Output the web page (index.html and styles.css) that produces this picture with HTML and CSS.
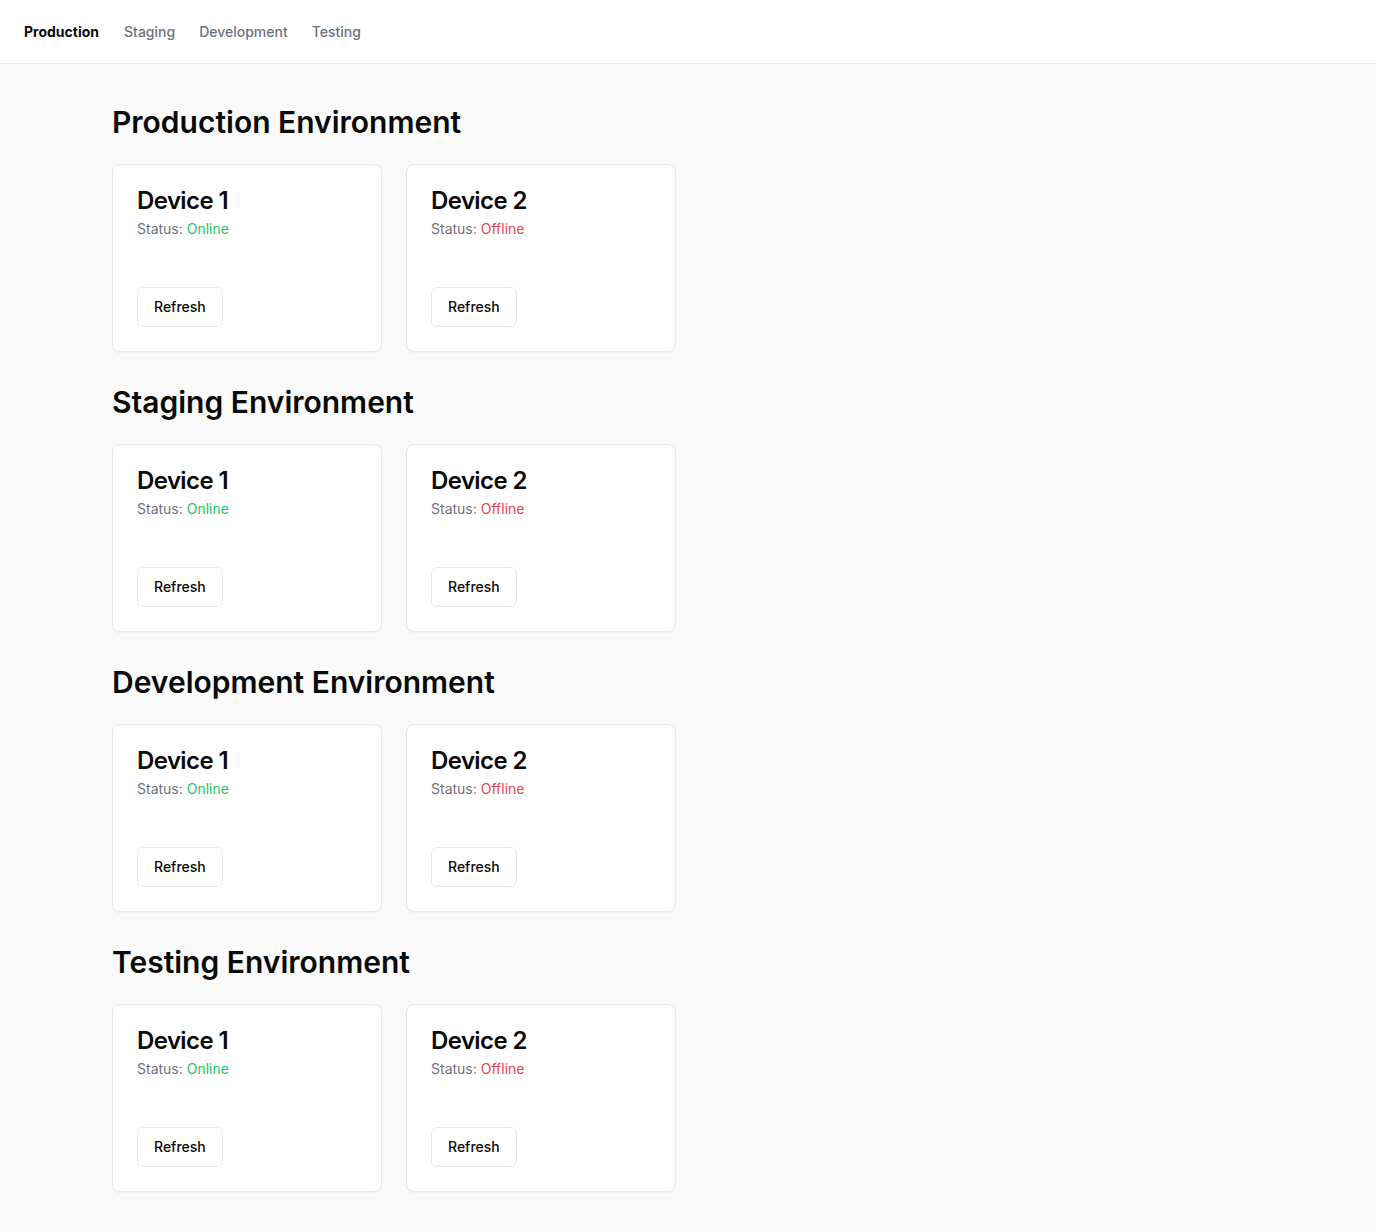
FILE: index.html
```html
<!DOCTYPE html>
<html lang="en">
<head>
<meta charset="utf-8">
<title>Environments</title>
<link rel="stylesheet" href="styles.css">
</head>
<body>
<nav class="nav">
  <a class="nav-link active">Production</a>
  <a class="nav-link">Staging</a>
  <a class="nav-link">Development</a>
  <a class="nav-link">Testing</a>
</nav>
<main class="main">
  <section class="env">
    <h2 class="env-title">Production Environment</h2>
    <div class="grid">
      <div class="card">
        <div class="card-header"><h3 class="card-title">Device 1</h3><p class="card-desc">Status: <span class="online">Online</span></p></div>
        <div class="card-content"></div>
        <div class="card-footer"><button class="btn">Refresh</button></div>
      </div>
      <div class="card">
        <div class="card-header"><h3 class="card-title">Device 2</h3><p class="card-desc">Status: <span class="offline">Offline</span></p></div>
        <div class="card-content"></div>
        <div class="card-footer"><button class="btn">Refresh</button></div>
      </div>
    </div>
  </section>
  <section class="env">
    <h2 class="env-title">Staging Environment</h2>
    <div class="grid">
      <div class="card">
        <div class="card-header"><h3 class="card-title">Device 1</h3><p class="card-desc">Status: <span class="online">Online</span></p></div>
        <div class="card-content"></div>
        <div class="card-footer"><button class="btn">Refresh</button></div>
      </div>
      <div class="card">
        <div class="card-header"><h3 class="card-title">Device 2</h3><p class="card-desc">Status: <span class="offline">Offline</span></p></div>
        <div class="card-content"></div>
        <div class="card-footer"><button class="btn">Refresh</button></div>
      </div>
    </div>
  </section>
  <section class="env">
    <h2 class="env-title">Development Environment</h2>
    <div class="grid">
      <div class="card">
        <div class="card-header"><h3 class="card-title">Device 1</h3><p class="card-desc">Status: <span class="online">Online</span></p></div>
        <div class="card-content"></div>
        <div class="card-footer"><button class="btn">Refresh</button></div>
      </div>
      <div class="card">
        <div class="card-header"><h3 class="card-title">Device 2</h3><p class="card-desc">Status: <span class="offline">Offline</span></p></div>
        <div class="card-content"></div>
        <div class="card-footer"><button class="btn">Refresh</button></div>
      </div>
    </div>
  </section>
  <section class="env">
    <h2 class="env-title">Testing Environment</h2>
    <div class="grid">
      <div class="card">
        <div class="card-header"><h3 class="card-title">Device 1</h3><p class="card-desc">Status: <span class="online">Online</span></p></div>
        <div class="card-content"></div>
        <div class="card-footer"><button class="btn">Refresh</button></div>
      </div>
      <div class="card">
        <div class="card-header"><h3 class="card-title">Device 2</h3><p class="card-desc">Status: <span class="offline">Offline</span></p></div>
        <div class="card-content"></div>
        <div class="card-footer"><button class="btn">Refresh</button></div>
      </div>
    </div>
  </section>
</main>
</body>
</html>
```
FILE: styles.css
```css
* { box-sizing: border-box; }
html, body { margin: 0; padding: 0; }
body {
  font-family: Inter, "Liberation Sans", sans-serif;
  background: #f9faf9;
  color: #0a0a0a;
  -webkit-font-smoothing: antialiased;
}
.nav {
  height: 64px;
  background: #ffffff;
  border-bottom: 1px solid #e5e7eb;
  display: flex;
  align-items: center;
  gap: 24px;
  padding: 0 24px;
}
.nav-link {
  font-size: 14px;
  line-height: 20px;
  font-weight: 500;
  color: #6b7280;
  text-decoration: none;
}
.nav-link.active { color: #0a0a0a; font-weight: 700; margin-right: 1px; }
.main {
  max-width: 1152px;
  margin: 0 auto;
  padding: 40px 0;
  display: flex;
  flex-direction: column;
  gap: 32px;
}
.env-title {
  margin: 0 0 24px;
  font-size: 30px;
  line-height: 36px;
  font-weight: 600;
}
.grid {
  display: grid;
  grid-template-columns: repeat(2, 270px);
  gap: 24px;
}
.card {
  background: #ffffff;
  border: 1px solid #e5e7eb;
  border-radius: 8px;
  box-shadow: 0 1px 2px rgba(0,0,0,0.05);
}
.card-header {
  padding: 24px;
  display: flex;
  flex-direction: column;
  gap: 6px;
}
.card-title {
  margin: 0;
  font-size: 24px;
  line-height: 24px;
  font-weight: 600;
  letter-spacing: -0.6px;
}
.card-desc {
  margin: 0;
  font-size: 14px;
  line-height: 20px;
  color: #71717a;
}
.online { color: #22c55e; }
.offline { color: #e5484d; }
.card-content { padding: 0 24px 24px; }
.card-footer {
  padding: 0 24px 24px;
  display: flex;
  align-items: center;
}
.btn {
  height: 40px;
  padding: 0 16px 1px;
  border: 1px solid #e5e7eb;
  border-radius: 6px;
  background: #ffffff;
  font-family: inherit;
  font-size: 14px;
  font-weight: 500;
  color: #0a0a0a;
}
```
